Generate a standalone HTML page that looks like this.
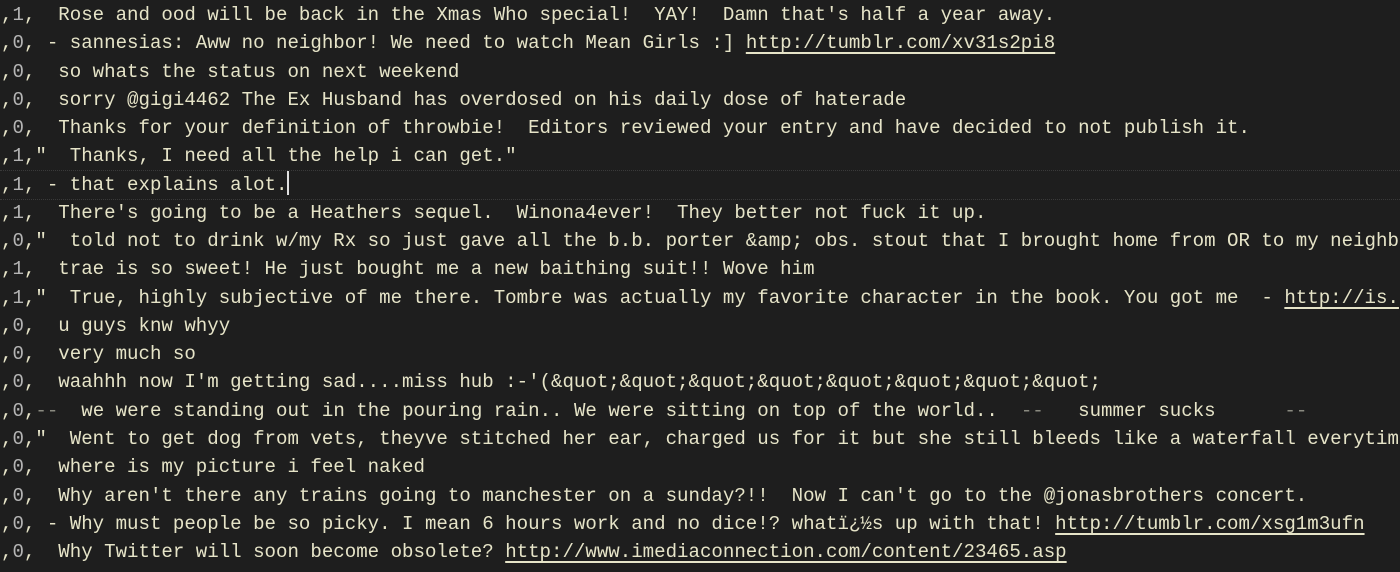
<!DOCTYPE html>
<html><head><meta charset="utf-8"><style>
html,body{margin:0;padding:0;background:#1e1e1e;width:1400px;height:572px;overflow:hidden}
pre{margin:0;padding:0 0 0 1px;font-family:"Liberation Mono",monospace;font-size:19.1px;line-height:28.27px;color:#e6e4c8;white-space:pre;position:relative;top:1px}
.n{color:#b5b5b5}
.u{text-decoration:underline;text-underline-offset:4px;text-decoration-thickness:1.5px}
.g{color:#8a8a80}
.cur{display:inline-block;width:2px;height:24px;background:#e0e0e0;vertical-align:-5px}
.cl{position:absolute;left:0;width:1400px;top:170px;height:28px;border-top:1px dotted #3a3a3a;border-bottom:1px dotted #3a3a3a}
</style></head><body>
<div class="cl"></div>
<pre>,<span class="n">1</span>,  Rose and ood will be back in the Xmas Who special!  YAY!  Damn that's half a year away.
,<span class="n">0</span>, - sannesias: Aww no neighbor! We need to watch Mean Girls :] <span class="u">http://tumblr.com/xv31s2pi8</span>
,<span class="n">0</span>,  so whats the status on next weekend
,<span class="n">0</span>,  sorry @gigi4462 The Ex Husband has overdosed on his daily dose of haterade
,<span class="n">0</span>,  Thanks for your definition of throwbie!  Editors reviewed your entry and have decided to not publish it.
,<span class="n">1</span>,"  Thanks, I need all the help i can get."
,<span class="n">1</span>, - that explains alot.<span class="cur"></span>
,<span class="n">1</span>,  There's going to be a Heathers sequel.  Winona4ever!  They better not fuck it up.
,<span class="n">0</span>,"  told not to drink w/my Rx so just gave all the b.b. porter &amp;amp; obs. stout that I brought home from OR to my neighb
,<span class="n">1</span>,  trae is so sweet! He just bought me a new baithing suit!! Wove him
,<span class="n">1</span>,"  True, highly subjective of me there. Tombre was actually my favorite character in the book. You got me  - <span class="u">http://is.</span>
,<span class="n">0</span>,  u guys knw whyy
,<span class="n">0</span>,  very much so
,<span class="n">0</span>,  waahhh now I'm getting sad....miss hub :-'(&amp;quot;&amp;quot;&amp;quot;&amp;quot;&amp;quot;&amp;quot;&amp;quot;&amp;quot;
,<span class="n">0</span>,<span class="g">--</span>  we were standing out in the pouring rain.. We were sitting on top of the world..  <span class="g">--</span>   summer sucks      <span class="g">--</span>
,<span class="n">0</span>,"  Went to get dog from vets, theyve stitched her ear, charged us for it but she still bleeds like a waterfall everytim
,<span class="n">0</span>,  where is my picture i feel naked
,<span class="n">0</span>,  Why aren't there any trains going to manchester on a sunday?!!  Now I can't go to the @jonasbrothers concert.
,<span class="n">0</span>, - Why must people be so picky. I mean 6 hours work and no dice!? whatï¿½s up with that! <span class="u">http://tumblr.com/xsg1m3ufn</span>
,<span class="n">0</span>,  Why Twitter will soon become obsolete? <span class="u">http://www.imediaconnection.com/content/23465.asp</span>
</pre>
</body></html>
